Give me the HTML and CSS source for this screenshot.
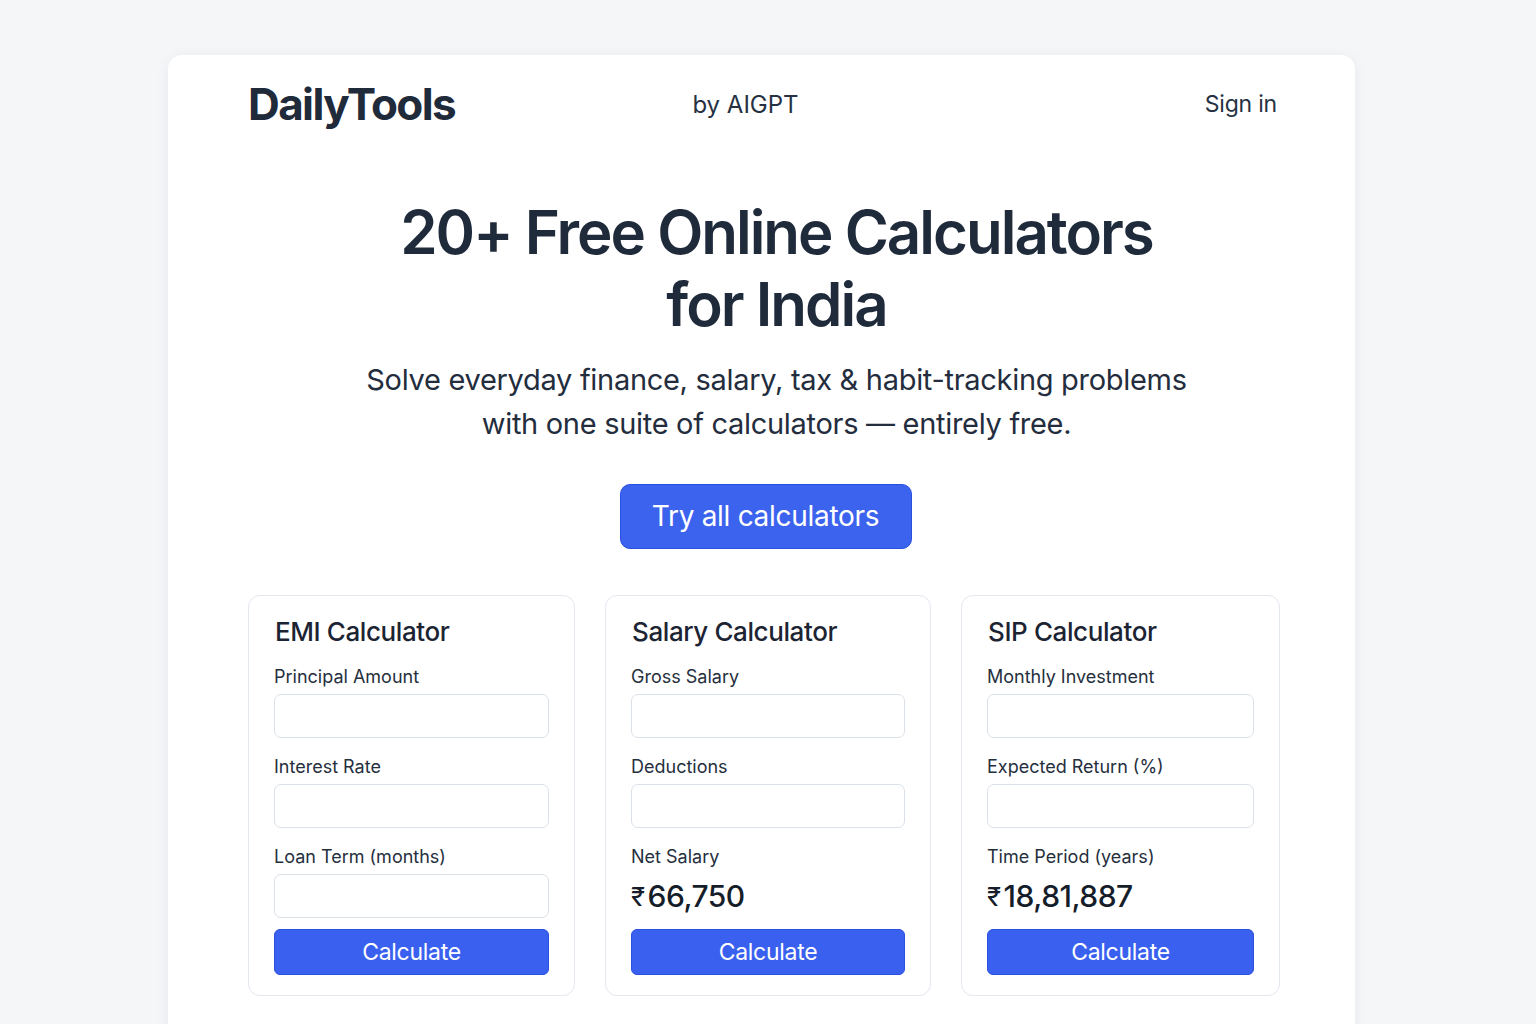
FILE: index.html
```html
<!DOCTYPE html>
<html lang="en">
<head>
    <meta charset="UTF-8">
    <meta name="viewport" content="width=device-width, initial-scale=1.0">
    <title>DailyTools - Free Online Calculators</title>
    <link rel="stylesheet" href="styles.css">
</head>
<body>
    <div class="page">
        <header class="top">
            <a href="#" class="logo">DailyTools</a>
            <span class="by">by AIGPT</span>
            <a href="#" class="signin">Sign in</a>
        </header>

        <section class="hero">
            <h1>20+ Free Online Calculators<br>for India</h1>
            <p>Solve everyday finance, salary, tax &amp; habit-tracking problems<br>with one suite of calculators — entirely free.</p>
            <a href="#" class="cta">Try all calculators</a>
        </section>

        <section class="calcs">
            <form class="calc">
                <h3>EMI Calculator</h3>
                <label>Principal Amount</label>
                <input type="text">
                <label>Interest Rate</label>
                <input type="text">
                <label>Loan Term (months)</label>
                <input type="text" class="last">
                <button type="button">Calculate</button>
            </form>

            <form class="calc">
                <h3>Salary Calculator</h3>
                <label>Gross Salary</label>
                <input type="text">
                <label>Deductions</label>
                <input type="text">
                <label>Net Salary</label>
                <div class="result"><span class="rs">₹</span>66,750</div>
                <button type="button">Calculate</button>
            </form>

            <form class="calc">
                <h3>SIP Calculator</h3>
                <label>Monthly Investment</label>
                <input type="text">
                <label>Expected Return (%)</label>
                <input type="text">
                <label>Time Period (years)</label>
                <div class="result"><span class="rs">₹</span>18,81,887</div>
                <button type="button">Calculate</button>
            </form>
        </section>
    </div>
</body>
</html>
```

FILE: styles.css
```css
* {
    margin: 0;
    padding: 0;
    box-sizing: border-box;
}

body {
    font-family: 'Inter', 'Noto Sans', sans-serif;
    background-color: #f4f6f8;
    color: #1e2837;
    height: 1024px;
    overflow: hidden;
}

.page {
    width: 1187px;
    margin: 55px 0 0 168px;
    min-height: 1000px;
    background: #fff;
    border-radius: 14px;
    box-shadow: 0 2px 14px rgba(30, 40, 60, 0.06);
    padding: 0 78px 0 80px;
}

.top {
    display: grid;
    grid-template-columns: 1fr auto 1fr;
    align-items: center;
    height: 98px;
}

.logo {
    font-size: 44px;
    font-weight: 700;
    letter-spacing: -1.6px;
    color: #1f2a3a;
    text-decoration: none;
}

.by {
    font-size: 24px;
    color: #263142;
    margin-right: 34px;
}

.signin {
    justify-self: end;
    font-size: 23px;
    letter-spacing: -0.2px;
    color: #263142;
    text-decoration: none;
}

.hero {
    text-align: center;
    padding-top: 43px;
    padding-left: 28px;
}

.hero h1 {
    font-size: 60px;
    font-weight: 600;
    letter-spacing: -2px;
    line-height: 72px;
    color: #1f2a3a;
}

.hero p {
    margin-top: 18px;
    font-size: 29px;
    line-height: 44px;
    letter-spacing: -0.3px;
    color: #232d3d;
}

.cta {
    display: inline-block;
    margin-top: 38px;
    margin-left: -22px;
    width: 292px;
    height: 65px;
    line-height: 63px;
    background: #3c63ee;
    border: 1px solid #2a50e0;
    border-radius: 10px;
    color: #fff;
    font-size: 28px;
    letter-spacing: -0.3px;
    text-decoration: none;
}

.calcs {
    display: grid;
    grid-template-columns: 327px 326px 319px;
    column-gap: 30px;
    margin-top: 46px;
}

.calc {
    border: 1px solid #e2e7ee;
    border-radius: 12px;
    padding: 20px 25px 20px 25px;
    height: 401px;
    display: flex;
    flex-direction: column;
}

.calc h3 {
    font-size: 26px;
    font-weight: 500;
    letter-spacing: -0.4px;
    line-height: 32px;
    color: #1c2433;
    margin-left: 1px;
    margin-bottom: 17px;
}

.calc label {
    font-size: 18px;
    line-height: 24px;
    color: #262f3d;
    margin-bottom: 5px;
}

.calc input {
    height: 44px;
    border: 1px solid #dbe1e8;
    border-radius: 7px;
    margin-bottom: 17px;
    font-size: 18px;
    padding: 0 12px;
}

.calc input.last {
    margin-bottom: 11px;
}

.result {
    height: 44px;
    display: flex;
    align-items: center;
    font-size: 30px;
    font-weight: 500;
    letter-spacing: -0.5px;
    color: #161d2a;
    margin-bottom: 11px;
}

.rs {
    font-size: 26px;
    font-weight: 400;
    margin-right: 3px;
}

.calc button {
    height: 46px;
    background: #3a60ef;
    border: 1px solid #2a50e0;
    border-radius: 6px;
    color: #fff;
    font-family: 'Inter', 'Noto Sans', sans-serif;
    font-size: 23px;
    letter-spacing: -0.3px;
    cursor: pointer;
}

.calc button:hover {
    background: #2f54e2;
}
```
